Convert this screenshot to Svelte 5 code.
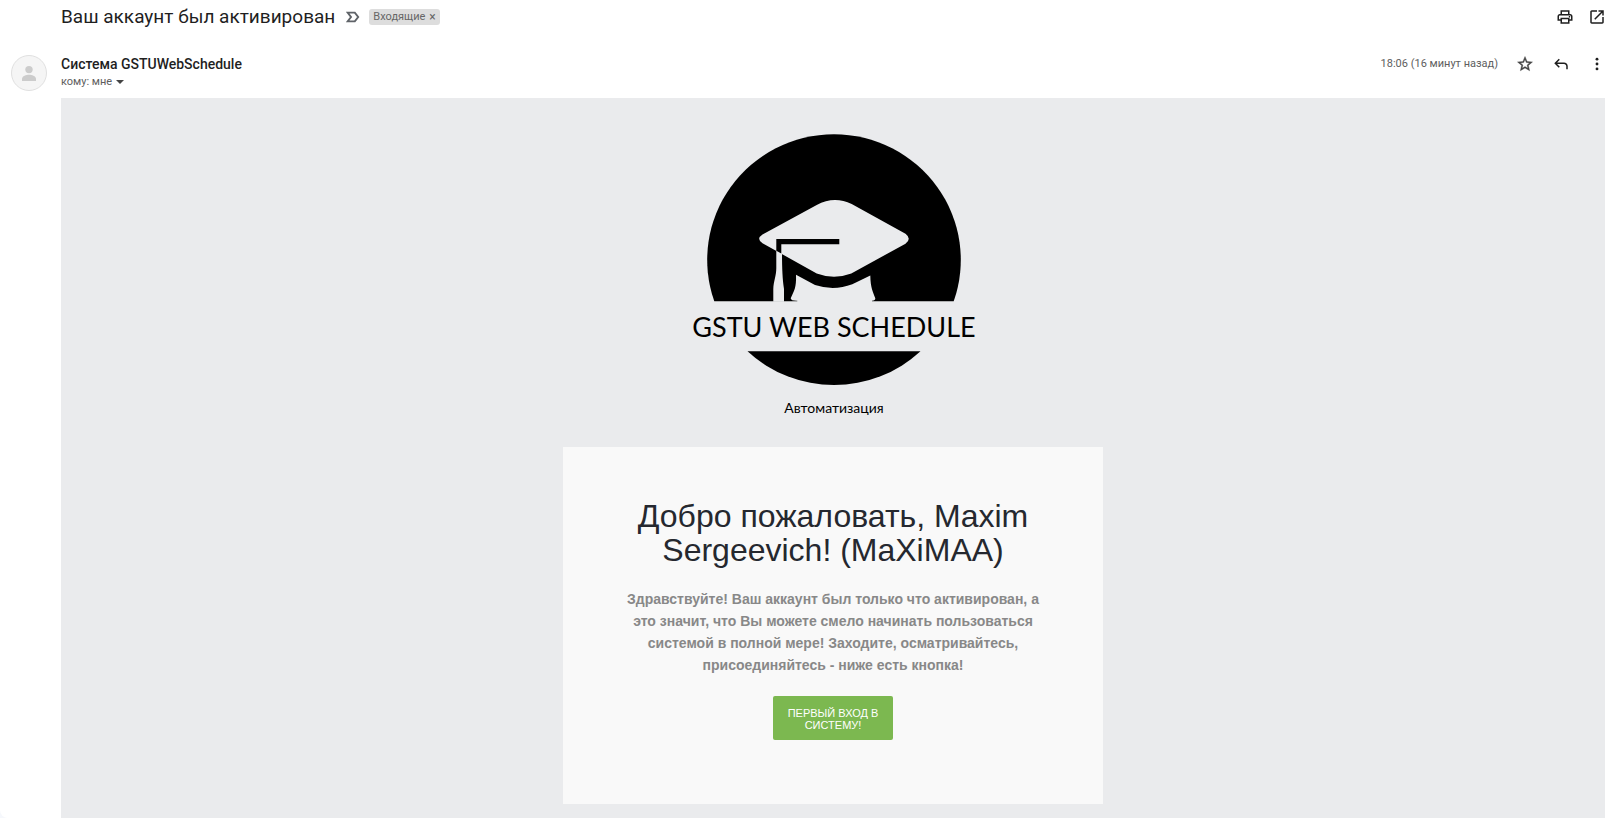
<script>
  const subject = 'Ваш аккаунт был активирован';
  const sender = 'Система GSTUWebSchedule';
</script>

<main class="page">
  <header class="subject-row">
    <h1>{subject}</h1>
    <svg class="important" viewBox="0 0 14 12" aria-hidden="true">
      <path d="M1.600 1.600h7.200L12.200 6l-3.400 4.400H1.600L5 6z" fill="none" stroke="#5f6368" stroke-width="1.900" />
    </svg>
    <span class="chip">
      Входящие
      <button type="button" class="chip-close" aria-label="Удалить ярлык">×</button>
    </span>
    <div class="tools">
      <button type="button" class="icon" aria-label="Печать">
        <svg viewBox="0 -960 960 960"><path d="M640-640v-120H320v120h-80v-200h480v200h-80Zm-480 80h640-640Zm560 100q17 0 28.500-11.500T760-500q0-17-11.500-28.500T720-540q-17 0-28.500 11.500T680-500q0 17 11.500 28.500T720-460Zm-80 260v-160H320v160h320Zm80 80H240v-160H80v-240q0-51 35-85.500t85-34.500h560q51 0 85.500 34.500T880-520v240H720v160Zm80-240v-160q0-17-11.500-28.500T760-560H200q-17 0-28.500 11.500T160-520v160h80v-80h480v80h80Z" /></svg>
      </button>
      <button type="button" class="icon" aria-label="Открыть в новом окне">
        <svg viewBox="0 -960 960 960"><path d="M200-120q-33 0-56.500-23.500T120-200v-560q0-33 23.500-56.500T200-840h280v80H200v560h560v-280h80v280q0 33-23.500 56.500T760-120H200Zm188-212-56-56 372-372H560v-80h280v280h-80v-144L388-332Z" /></svg>
      </button>
    </div>
  </header>

  <article class="message">
    <div class="avatar">
      <svg viewBox="0 0 34 34" aria-hidden="true">
        <circle cx="17" cy="13.600" r="3.700" />
        <path d="M10 25v-2.200c0-2.700 4.400-4.100 7-4.100s7 1.400 7 4.100V25z" />
      </svg>
    </div>

    <div class="content">
      <div class="meta">
        <div class="from">
          <h2>{sender}</h2>
          <button type="button" class="recipient">
            кому: мне
            <svg viewBox="0 0 8 4" aria-hidden="true"><path d="M0 0h8L4 4z" /></svg>
          </button>
        </div>
        <div class="actions">
          <time datetime="18:06">18:06 (16 минут назад)</time>
          <button type="button" class="icon star" aria-label="Пометить">
            <svg viewBox="0 0 24 24"><path d="M22 9.240l-7.190-.620L12 2 9.190 8.630 2 9.240l5.460 4.730L5.820 21 12 17.270 18.180 21l-1.630-7.030L22 9.240zM12 15.400l-3.760 2.270 1-4.280-3.320-2.880 4.380-.380L12 6.100l1.710 4.040 4.380.380-3.320 2.880 1 4.280L12 15.400z" /></svg>
          </button>
          <button type="button" class="icon" aria-label="Ответить">
            <svg viewBox="0 -960 960 960"><path d="M760-200v-160q0-50-35-85t-85-35H273l144 144-57 56-240-240 240-240 57 56-144 144h367q83 0 141.500 58.500T840-360v160h-80Z" /></svg>
          </button>
          <button type="button" class="icon" aria-label="Ещё">
            <svg viewBox="0 0 24 24"><circle cx="12" cy="5.500" r="1.900" /><circle cx="12" cy="12" r="1.900" /><circle cx="12" cy="18.500" r="1.900" /></svg>
          </button>
        </div>
      </div>

      <section class="mail">
        <svg class="logo" viewBox="-1 0 300 300" role="img" aria-label="GSTU Web Schedule">
          <path d="M30.300 183.300A126.800 125.600 0 1 1 269.700 183.300Z" />
          <path d="M63.500 233.300H236.500A126.800 125.600 0 0 1 63.500 233.300Z" />
          <g class="cut">
            <path d="M132.700 87Q150 77.600 167.700 86L221.500 115.700Q228 120.700 221.500 125.700L167.300 155.500Q150 162 132.700 155.500L78.500 125.200Q71.800 120.700 78.500 116.400Z" />
            <path d="M92.300 131V150C92.300 158 89.600 163 89.300 171V183.800H100V171C98.400 160 98 150 98 134Z" />
            <path d="M112 156.800L131 167Q150 173.200 168.300 166.200L186.300 157.500C186.500 170 189 174 191.300 180.300Q191.500 182.500 188 182.800V184H113.300V182.800Q107 183 106.700 180.300C110 173 112.500 170 112 156.800Z" />
          </g>
          <path d="M92.300 121H155.300V126.300H97.300V135.600L92.300 132.800Z" />
          <text x="150" y="219" class="brand">GSTU WEB SCHEDULE</text>
          <text x="150" y="295" class="tagline">Автоматизация</text>
        </svg>

        <div class="card">
          <h3>Добро пожаловать, Maxim Sergeevich! (MaXiMAA)</h3>
          <p>Здравствуйте! Ваш аккаунт был только что активирован, а это значит, что Вы можете смело начинать пользоваться системой в полной мере! Заходите, осматривайтесь, присоединяйтесь - ниже есть кнопка!</p>
          <a class="enter" href="#login">ПЕРВЫЙ ВХОД В СИСТЕМУ!</a>
        </div>
      </section>
    </div>
  </article>
</main>

<style>
  :global(body) {
    margin: 0;
    background: #f6f8fc;
  }

  .page {
    box-sizing: border-box;
    min-height: 100vh;
    padding-right: 8px;
    background: #fff;
    border-bottom-left-radius: 8px;
    color: #1f1f1f;
    font-family: Roboto, sans-serif;
  }

  h1, h2, h3, p {
    margin: 0;
  }

  button {
    padding: 0;
    border: 0;
    background: none;
    color: inherit;
    font: inherit;
    cursor: pointer;
  }

  svg {
    display: block;
  }

  .subject-row {
    display: flex;
    align-items: center;
    height: 34px;
    padding-left: 61px;
  }

  h1 {
    font: 400 19px/24px Roboto, sans-serif;
  }

  .important {
    width: 14px;
    height: 12px;
    margin: 0 9px 0 11px;
  }

  .chip {
    display: flex;
    align-items: center;
    gap: 4px;
    height: 16px;
    padding: 0 4px;
    border-radius: 3px;
    background: #ddd;
    color: #666;
    font-size: 11px;
    line-height: 16px;
  }

  .chip-close {
    font-size: 12px;
    line-height: 16px;
  }

  .tools {
    display: flex;
    gap: 14px;
    margin-left: auto;
  }

  .icon,
  .icon svg {
    width: 18px;
    height: 18px;
  }

  .icon {
    fill: #1f1f1f;
  }

  .star {
    fill: #444;
    stroke: #444;
    stroke-width: 0.500;
  }

  .message {
    display: flex;
    gap: 14px;
    padding-left: 11px;
  }

  .avatar {
    box-sizing: border-box;
    flex: none;
    width: 36px;
    height: 36px;
    margin-top: 21px;
    border: 1px solid #e0e0e0;
    border-radius: 50%;
    background: #f5f5f5;
    fill: #ccc;
  }

  .content {
    flex: 1;
    min-width: 0;
  }

  .meta {
    display: flex;
    justify-content: space-between;
    align-items: flex-start;
    height: 64px;
  }

  .from {
    padding-top: 20px;
  }

  h2 {
    font: 500 14px/20px Roboto, sans-serif;
  }

  .recipient {
    display: flex;
    align-items: center;
    gap: 4px;
    color: #5e5e5e;
    font-size: 11px;
    line-height: 16px;
  }

  .recipient svg {
    width: 8px;
    height: 4px;
    fill: #444;
  }

  .actions {
    display: flex;
    align-items: center;
    gap: 18px;
    padding-top: 21px;
  }

  time {
    color: #5e5e5e;
    font-size: 11px;
    line-height: 16px;
  }

  .mail {
    display: flex;
    flex-direction: column;
    align-items: center;
    gap: 29px;
    margin-right: 1px;
    padding: 20px 0 14px;
    background: #eaebed;
    font-family: "Liberation Sans", Arial, sans-serif;
  }

  .logo {
    width: 300px;
    height: 300px;
  }

  .cut {
    fill: #eaebed;
  }

  .brand,
  .tagline {
    font-family: Lato, sans-serif;
    text-anchor: middle;
  }

  .brand {
    font-size: 27px;
  }

  .tagline {
    font-size: 14px;
  }

  .card {
    box-sizing: border-box;
    display: flex;
    flex-direction: column;
    align-items: center;
    width: 100%;
    max-width: 540px;
    padding: 52px 56px 64px;
    background: #f9f9f9;
    text-align: center;
  }

  h3 {
    color: #25282f;
    font-size: 32px;
    font-weight: 400;
    line-height: 34px;
  }

  p {
    margin: 21px 0 20px;
    color: #888;
    font-size: 14px;
    font-weight: 700;
    line-height: 22px;
  }

  .enter {
    box-sizing: border-box;
    width: 120px;
    padding: 11px 12px 9px;
    border-radius: 2px;
    background: #7cb850;
    color: #fff;
    font-size: 11px;
    line-height: 12px;
    text-decoration: none;
  }
</style>
